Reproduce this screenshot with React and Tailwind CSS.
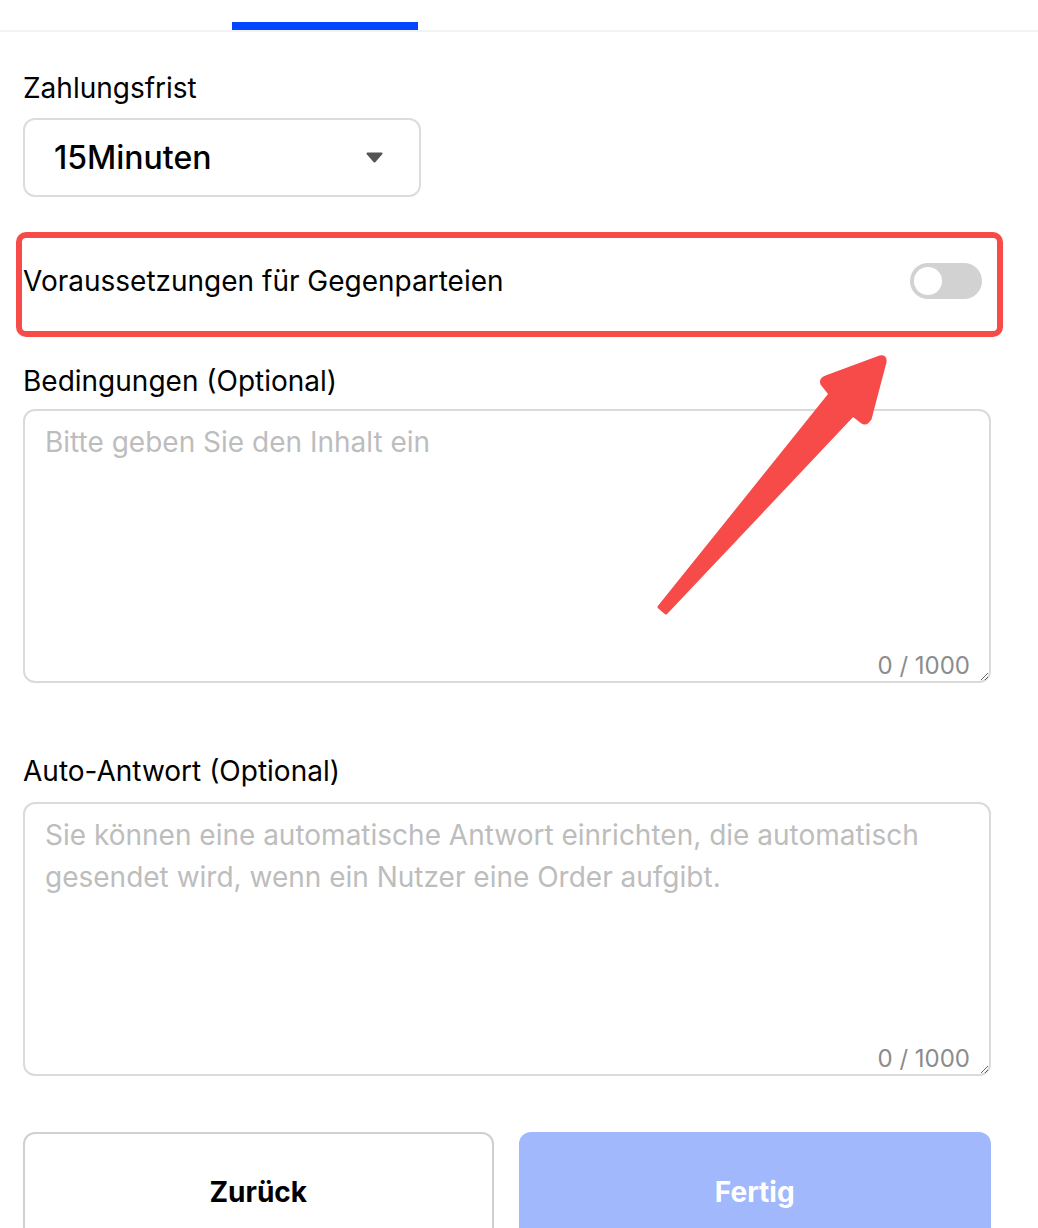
import { useState } from 'react'

// Step form: payment window, counterparty toggle, terms + auto reply, footer actions.
// The red box + arrow are an annotation drawn on top of the toggle row.

function Toggle({ on, onChange }) {
  return (
    <button
      type="button"
      onClick={() => onChange(!on)}
      className={`flex h-[36px] w-[72px] items-center rounded-full p-[4px] ${on ? 'justify-end bg-[#0047ff]' : 'justify-start bg-[#d2d2d2]'}`}
    >
      <span className="h-[28px] w-[28px] rounded-full bg-white" />
    </button>
  )
}

function CountedTextarea({ placeholder }) {
  const [value, setValue] = useState('')
  return (
    <div className="relative">
      <textarea
        value={value}
        maxLength={1000}
        onChange={(e) => setValue(e.target.value)}
        placeholder={placeholder}
        className="block h-[274px] w-full rounded-[12px] border-2 border-[#dadada] px-[20px] py-[10px] text-[28px] leading-[42px] text-black outline-none placeholder:text-[#bdbdbd]"
      />
      <span className="pointer-events-none absolute bottom-[1px] right-[21px] text-[24px] leading-[32px] text-[#8c8c8c]">
        {value.length} / 1000
      </span>
    </div>
  )
}

export default function App() {
  const [counterparty, setCounterparty] = useState(false)

  return (
    <div className="relative min-h-[1228px] overflow-hidden bg-white font-['Inter','Noto_Sans',sans-serif] text-black">
      {/* tab strip, only the active underline is visible */}
      <div className="flex h-[32px] items-end border-b-2 border-[#f3f3f3]">
        <div className="ml-[232px] h-[8px] w-[186px] bg-[#0047ff]" />
      </div>

      <div className="pl-[23px] pr-[47px]">
        <div className="mt-[38px] text-[28px] leading-[36px]">Zahlungsfrist</div>
        <button
          type="button"
          className="mt-[12px] flex h-[79px] w-[398px] items-center justify-between rounded-[12px] border-2 border-[#dcdcdc] pl-[29px] pr-[36px]"
        >
          <span className="text-[32px] font-medium leading-[40px]">15Minuten</span>
          <svg width="17" height="11" viewBox="0 0 17 11">
            <path d="M1.5 1.5 H15.5 L8.5 9.5 Z" fill="#555" stroke="#555" strokeWidth="2" strokeLinejoin="round" />
          </svg>
        </button>

        <div className="-ml-[7px] -mr-[12px] mt-[35px] flex h-[105px] items-center justify-between rounded-[10px] border-[6px] border-[#f74b4a] pb-[8px] pl-[1px] pr-[15px]">
          <span className="text-[28px] leading-[36px]">Voraussetzungen für Gegenparteien</span>
          <Toggle on={counterparty} onChange={setCounterparty} />
        </div>

        <div className="mt-[26px] text-[28px] leading-[36px]">Bedingungen (Optional)</div>
        <div className="mt-[10px]">
          <CountedTextarea placeholder="Bitte geben Sie den Inhalt ein" />
        </div>

        <div className="mt-[70px] text-[28px] leading-[36px]">Auto-Antwort (Optional)</div>
        <div className="mt-[13px]">
          <CountedTextarea placeholder="Sie können eine automatische Antwort einrichten, die automatisch gesendet wird, wenn ein Nutzer eine Order aufgibt." />
        </div>

        <div className="mt-[56px] flex gap-[25px]">
          <button type="button" className="h-[120px] w-[471px] rounded-[12px] border-2 border-[#d0d0d0] text-[28px] font-bold">
            Zurück
          </button>
          <button type="button" className="h-[120px] w-[473px] rounded-[12px] bg-[#a1b8fd] text-[28px] font-bold text-white">
            Fertig
          </button>
        </div>
      </div>

      {/* annotation arrow pointing at the toggle */}
      <svg className="pointer-events-none absolute left-[650px] top-[350px]" width="245" height="270" viewBox="650 350 245 270">
        <path
          d="M659 607 L830 394 L822 384 Q820 379 826 377 L880 357 Q886 356 885 362 L870 419 Q866 425 862 422 L853 415 L666 613 Z"
          fill="#f74b4a"
          stroke="#f74b4a"
          strokeWidth="3"
          strokeLinejoin="round"
        />
      </svg>
    </div>
  )
}
